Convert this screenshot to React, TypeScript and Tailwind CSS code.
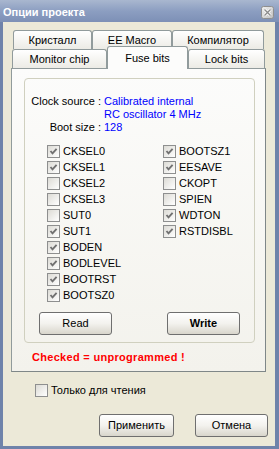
import React from 'react'

const Check = ({ checked }: { checked?: boolean }) => (
  <span className="w-[13px] h-[13px] shrink-0 border border-[#8e8f8f] bg-linear-to-br from-[#dcdbd5] to-white flex items-center justify-center">
    {checked && (
      <svg width="11" height="11" viewBox="0 0 11 11">
        <path d="M2.5 5 L4.5 7.3 L8.6 2.8" stroke="#717171" strokeWidth="1.9" fill="none" />
      </svg>
    )}
  </span>
)

const Btn = ({ children, className }: { children: React.ReactNode; className: string }) => (
  <div
    className={`h-[23px] shrink-0 rounded-[3px] border border-[#6f6f6f] bg-linear-to-b from-white via-[#f3f2ee] to-[#d9d6cc] flex items-center justify-center text-[11px] text-black ${className}`}
  >
    {children}
  </div>
)

const BackTab = ({ label, className }: { label: string; className: string }) => (
  <div
    className={`h-[19px] border border-b-0 border-[#919b9c] rounded-t-[3px] bg-linear-to-b from-white to-[#ecebe5] flex items-center justify-center text-[11px] leading-none ${className}`}
  >
    {label}
  </div>
)

const left: [string, boolean][] = [
  ['CKSEL0', true],
  ['CKSEL1', true],
  ['CKSEL2', false],
  ['CKSEL3', false],
  ['SUT0', false],
  ['SUT1', true],
  ['BODEN', true],
  ['BODLEVEL', true],
  ['BOOTRST', true],
  ['BOOTSZ0', true],
]

const right: [string, boolean][] = [
  ['BOOTSZ1', true],
  ['EESAVE', true],
  ['CKOPT', false],
  ['SPIEN', false],
  ['WDTON', true],
  ['RSTDISBL', true],
]

const FuseRow = ({ label, checked }: { label: string; checked: boolean }) => (
  <div className="h-[16px] flex items-center gap-[3px]">
    <Check checked={checked} />
    <span>{label}</span>
  </div>
)

export default function App() {
  return (
    <div className="w-[279px] h-[449px] flex flex-col font-['Liberation_Sans',Arial,sans-serif] text-[11px] text-black select-none">
      <div className="h-[22px] shrink-0 bg-linear-to-b from-[#a9b7cf] via-[#8c9ec1] to-[#7d90b6] flex items-center justify-between pl-[3px] pr-[5px] pt-[2px]">
        <span className="text-white font-bold text-[11px]">Опции проекта</span>
        <svg width="13" height="13" viewBox="0 0 13 13">
          <defs>
            <linearGradient id="cb" x1="0" y1="0" x2="1" y2="1">
              <stop offset="0" stopColor="#f2f2f2" />
              <stop offset="1" stopColor="#bdbdbd" />
            </linearGradient>
          </defs>
          <rect x="0.5" y="0.5" width="12" height="12" rx="2" fill="url(#cb)" stroke="#8f8f8f" />
          <path d="M3.5 3.5 L9.5 9.5 M9.5 3.5 L3.5 9.5" stroke="#ffffff" strokeWidth="3" />
          <path d="M3.5 3.5 L9.5 9.5 M9.5 3.5 L3.5 9.5" stroke="#8a8a8a" strokeWidth="1.4" />
        </svg>
      </div>

      <div className="flex-1 flex flex-col bg-[#ece9d8] border-l-[3px] border-r-[4px] border-b-[3px] border-[#6f83aa]">
        <div className="flex ml-[10px] mt-[8px]">
          <BackTab label="Кристалл" className="w-[79px]" />
          <BackTab label="EE Macro" className="w-[80px]" />
          <BackTab label="Компилятор" className="w-[92px]" />
        </div>
        <div className="flex items-end ml-[9px] -mt-[3px] h-[22px] relative z-10">
          <BackTab label="Monitor chip" className="w-[95px]" />
          <div className="w-[81px] h-[23px] -mb-[1px] border border-b-0 border-[#919b9c] rounded-t-[3px] bg-[#fcfcfb] flex items-center justify-center text-[11px] leading-none">
            Fuse bits
          </div>
          <BackTab label="Lock bits" className="w-[77px]" />
        </div>

        <div className="ml-[8px] w-[255px] h-[304px] shrink-0 border border-[#919b9c] border-r-[#7f8788] border-b-[#7f8788] bg-linear-to-b from-[#fcfcfb] to-[#f3f2ec] flex flex-col">
          <div className="ml-[12px] mt-[9px] w-[231px] h-[265px] border border-[#d0d0bf] rounded-[4px] flex flex-col">
            <div className="mt-[16px] grid grid-cols-[76px_1fr] gap-x-[3px] leading-[13px]">
              <span className="text-right">Clock source :</span>
              <span className="text-[#0000ff]">
                Calibrated internal
                <br />
                RC oscillator 4 MHz
              </span>
              <span className="text-right">Boot size :</span>
              <span className="text-[#0000ff]">128</span>
            </div>

            <div className="mt-[9px] ml-[22px] flex">
              <div className="w-[116px] flex flex-col">
                {left.map(([l, c]) => (
                  <FuseRow key={l} label={l} checked={c} />
                ))}
              </div>
              <div className="flex flex-col">
                {right.map(([l, c]) => (
                  <FuseRow key={l} label={l} checked={c} />
                ))}
              </div>
            </div>

            <div className="mt-[9px] ml-[14px] flex gap-[55px]">
              <Btn className="w-[73px] font-normal">Read</Btn>
              <Btn className="w-[73px] font-bold">Write</Btn>
            </div>
          </div>

          <div className="mt-[8px] ml-[20px] leading-[13px] font-bold tracking-[0.3px] text-[#ff0000]">
            Checked = unprogrammed !
          </div>
        </div>

        <div className="mt-[10px] ml-[32px] h-[16px] flex items-center gap-[3px]">
          <Check />
          <span>Только для чтения</span>
        </div>

        <div className="mt-[16px] flex">
          <Btn className="ml-[96px] w-[75px]">Применить</Btn>
          <Btn className="ml-[21px] w-[73px]">Отмена</Btn>
        </div>
      </div>
    </div>
  )
}
